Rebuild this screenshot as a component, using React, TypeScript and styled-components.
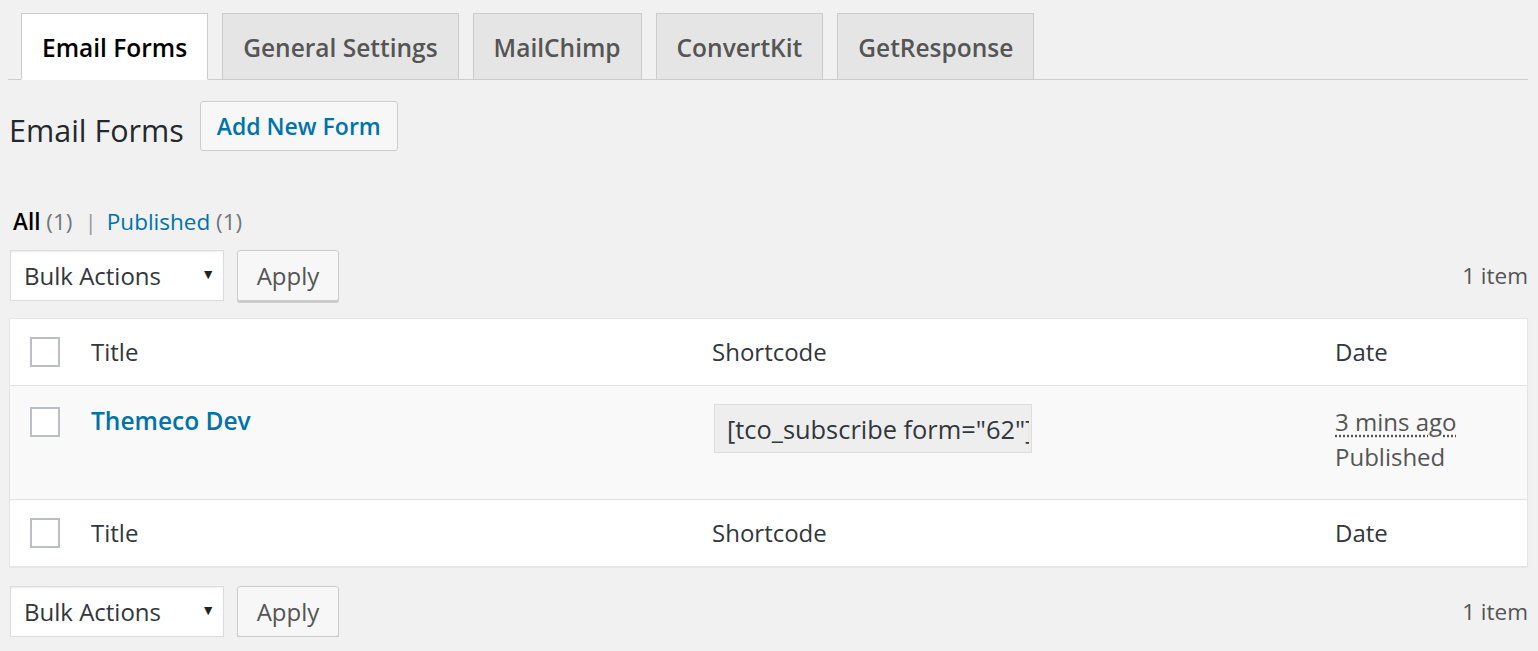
import React from 'react'
import styled, { createGlobalStyle } from 'styled-components'

const GlobalStyle = createGlobalStyle`
  html, body {
    margin: 0;
    padding: 0;
    background: #f1f1f1;
  }
  body {
    font-family: "Open Sans", "Noto Sans", sans-serif;
    color: #32373c;
    font-size: 24px;
  }
  * {
    box-sizing: border-box;
  }
`

const tabs = ['Email Forms', 'General Settings', 'MailChimp', 'ConvertKit', 'GetResponse']

const App = () => {
  return (
    <Root>
      <GlobalStyle />
      <TabBar>
        {tabs.map((t, i) => (
          <Tab key={t} $active={i === 0}>{t}</Tab>
        ))}
      </TabBar>

      <HeadingRow>
        <Heading>Email Forms</Heading>
        <AddButton>Add New Form</AddButton>
      </HeadingRow>

      <Filters>
        <Current>All</Current> <Count>(1)</Count>
        <Sep>|</Sep>
        <FilterLink>Published</FilterLink> <Count>(1)</Count>
      </Filters>

      <TableNav $top>
        <BulkActions />
      </TableNav>

      <Table>
        <HeadRow>
          <CheckCell><Checkbox /></CheckCell>
          <Cell>Title</Cell>
          <Cell>Shortcode</Cell>
          <Cell>Date</Cell>
        </HeadRow>
        <BodyRow>
          <CheckCell><Checkbox /></CheckCell>
          <Cell><RowTitle>Themeco Dev</RowTitle></Cell>
          <Cell>
            <Shortcode readOnly value={'[tco_subscribe form="62"]'} />
          </Cell>
          <Cell>
            <DateText>
              <Abbr title="2018/01/01">3 mins ago</Abbr>
              <br />
              Published
            </DateText>
          </Cell>
        </BodyRow>
        <FootRow>
          <CheckCell><Checkbox /></CheckCell>
          <Cell>Title</Cell>
          <Cell>Shortcode</Cell>
          <Cell>Date</Cell>
        </FootRow>
      </Table>

      <TableNav>
        <BulkActions />
      </TableNav>
    </Root>
  )
}

const BulkActions = () => (
  <>
    <Actions>
      <Select>
        <span>Bulk Actions</span>
        <Arrow>▼</Arrow>
      </Select>
      <ApplyButton>Apply</ApplyButton>
    </Actions>
    <ItemCount>1 item</ItemCount>
  </>
)

export default App

const Root = styled('div')`
  padding: 0 10px 0 8px;
`

const TabBar = styled('div')`
  display: flex;
  gap: 14px;
  padding: 13px 0 0 13px;
  border-bottom: 1px solid #ccc;
`

const Tab = styled('div')<{ $active?: boolean }>`
  height: 67px;
  margin-bottom: -1px;
  padding: 1px 20px 0;
  display: flex;
  align-items: center;
  border: 1px solid #ccc;
  border-bottom-color: ${p => (p.$active ? '#fff' : '#ccc')};
  background: ${p => (p.$active ? '#fff' : '#e5e5e5')};
  color: ${p => (p.$active ? '#000' : '#555')};
  font-size: 24.5px;
  font-weight: 600;
  white-space: nowrap;
`

const HeadingRow = styled('div')`
  display: flex;
  align-items: center;
  margin-top: 21px;
  padding-left: 1px;
`

const Heading = styled('h1')`
  margin: 8px 16px 0 0;
  font-size: 30.5px;
  font-weight: 400;
  color: #23282d;
`

const AddButton = styled('button')`
  height: 50px;
  padding: 0 16px;
  border: 1px solid #ccc;
  border-radius: 3px;
  background: #f7f7f7;
  color: #0073aa;
  font-family: inherit;
  font-size: 23px;
  font-weight: 600;
`

const Filters = styled('div')`
  margin-top: 54px;
  padding-left: 5px;
  font-size: 22.5px;
  line-height: 34px;
  color: #72777c;
`

const Current = styled('span')`
  color: #000;
  font-weight: 600;
`

const Count = styled('span')`
  color: #72777c;
`

const Sep = styled('span')`
  margin: 0 10px 0 12px;
  color: #999;
`

const FilterLink = styled('span')`
  color: #0073aa;
`

const TableNav = styled('div')<{ $top?: boolean }>`
  display: flex;
  align-items: center;
  justify-content: space-between;
  margin: ${p => (p.$top ? '11px 0 17px' : '19px 0 0')};
  padding-left: 2px;
`

const Actions = styled('div')`
  display: flex;
  align-items: flex-start;
  gap: 13px;
`

const Select = styled('div')`
  width: 214px;
  height: 51px;
  display: flex;
  align-items: center;
  justify-content: space-between;
  padding: 0 8px 0 13px;
  border: 1px solid #ddd;
  background: #fff;
  box-shadow: inset 0 1px 2px rgba(0, 0, 0, 0.07);
  color: #32373c;
  font-size: 24px;
`

const Arrow = styled('span')`
  font-size: 14px;
  color: #222;
  margin-top: -4px;
`

const ApplyButton = styled('button')`
  width: 102px;
  height: 51px;
  border: 1px solid #ccc;
  border-radius: 3px;
  background: #f7f7f7;
  box-shadow: 0 2px 0 #ccc;
  color: #555;
  font-family: inherit;
  font-size: 24px;
`

const ItemCount = styled('span')`
  color: #555;
  font-size: 22.5px;
`

const Table = styled('div')`
  margin-left: 1px;
  border: 1px solid #e5e5e5;
  background: #fff;
  box-shadow: 0 1px 1px rgba(0, 0, 0, 0.04);
`

const Row = styled('div')`
  display: grid;
  grid-template-columns: 81px 621px 623px 1fr;
`

const HeadRow = styled(Row)`
  height: 67px;
  align-items: center;
  border-bottom: 1px solid #e1e1e1;
`

const BodyRow = styled(Row)`
  height: 113px;
  padding-top: 18px;
  align-items: start;
  background: #f9f9f9;
`

const FootRow = styled(Row)`
  height: 67px;
  align-items: center;
  border-top: 1px solid #e1e1e1;
`

const CheckCell = styled('div')`
  padding-left: 20px;
  display: flex;
  align-items: center;
  ${BodyRow} & {
    padding-top: 3px;
  }
`

const Checkbox = styled('span')`
  display: block;
  width: 30px;
  height: 30px;
  border: 2px solid #bbbfc3;
  background: #fff;
`

const Cell = styled('div')`
  color: #32373c;
  font-size: 24px;
  line-height: 34px;
  white-space: nowrap;
`

const RowTitle = styled('span')`
  color: #0073aa;
  font-weight: 600;
  font-size: 24.5px;
`

const Shortcode = styled('input')`
  width: 318px;
  height: 49px;
  margin-left: 2px;
  padding: 1px 2px 0 12px;
  border: 1px solid #ddd;
  background: #eee;
  color: #32373c;
  font-family: inherit;
  font-size: 25.4px;
  outline: none;
`

const DateText = styled('div')`
  color: #555;
  line-height: 35px;
`

const Abbr = styled('abbr')`
  text-decoration: underline dotted;
  text-underline-offset: 4px;
`
